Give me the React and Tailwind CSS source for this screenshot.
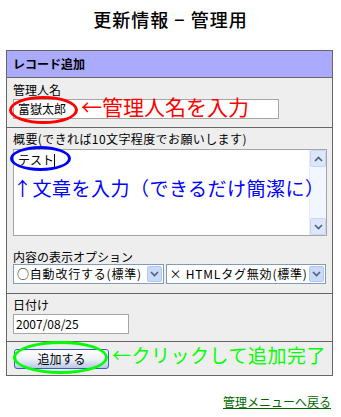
import React from 'react';

const font = "font-['Noto_Sans_CJK_JP','Noto_Sans_CJK_SC',sans-serif]";

const Chevron = ({ up }) => (
  <svg width="9" height="6" viewBox="0 0 9 6">
    <path d={up ? 'M1 5l3.5-3.5L8 5' : 'M1 1l3.5 3.5L8 1'} stroke="#4d6185" strokeWidth="1.6" fill="none" />
  </svg>
);

const SelectBox = ({ text, className }) => (
  <div className={`flex h-[20px] items-center justify-between border border-[#7f9db9] bg-white pl-[3px] pr-[1px] ${className}`}>
    <span className="leading-[16px] whitespace-nowrap tracking-[0.8px]">{text}</span>
    <div className="flex h-[16px] w-[15px] items-center justify-center rounded-[2px] border border-[#b3c7ef] bg-[#c9daf8]">
      <Chevron />
    </div>
  </div>
);

export default function App() {
  return (
    <div className={`relative h-[417px] w-[341px] overflow-hidden bg-white text-[12px] text-black ${font}`}>
      <h1 className="pt-[9px] text-center text-[18px] font-medium leading-[20px] tracking-[1px]">更新情報 − 管理用</h1>

      {/* Form panel */}
      <div className="ml-[6px] mt-[21px] w-[327px] border border-[#666666] bg-[#eeeeee]">
        <div className="flex h-[27px] items-center border-b border-[#666666] bg-[#aaaaff] pl-[6px] font-bold">
          レコード追加
        </div>

        <div className="border-b border-[#666666] px-[6px] pb-[8px] pt-[4px]">
          <div className="leading-[15px]">管理人名</div>
          <div className="mt-[2px] flex h-[20px] w-[266px] items-center border border-[#a5a5a5] bg-white pl-[4px] leading-[16px]">
            富嶽太郎
          </div>
        </div>

        <div className="border-b border-[#666666] px-[6px] pb-[9px] pt-[3px]">
          <div className="leading-[15px] whitespace-nowrap tracking-[0.4px]">概要(できれば10文字程度でお願いします)</div>
          <div className="mt-[3px] flex h-[87px] w-[314px] border border-[#a5a5a5] bg-white">
            <div className="flex-1 pl-[4px] pt-[2px] leading-[16px]">
              テスト<span className="inline-block h-[13px] w-px translate-y-[2px] bg-black" />
            </div>
            <div className="flex w-[17px] flex-col justify-between border-l border-[#e4ecfc] bg-[#f2f6fe]">
              <div className="flex h-[17px] items-center justify-center rounded-[2px] border border-[#c8d6f5] bg-[#dde7fb]">
                <Chevron up />
              </div>
              <div className="flex h-[17px] items-center justify-center rounded-[2px] border border-[#c8d6f5] bg-[#dde7fb]">
                <Chevron />
              </div>
            </div>
          </div>
          <div className="mt-[13px] leading-[15px]">内容の表示オプション</div>
          <div className="flex gap-[2px]">
            <SelectBox text="○自動改行する(標準)" className="w-[151px]" />
            <SelectBox text="× HTMLタグ無効(標準)" className="w-[161px]" />
          </div>
        </div>

        <div className="border-b border-[#666666] px-[6px] pb-[7px] pt-[3px]">
          <div className="leading-[15px]">日付け</div>
          <div className="mt-[2px] flex h-[20px] w-[116px] items-center border border-[#a5a5a5] bg-white pl-[2px] leading-[16px]">
            2007/08/25
          </div>
        </div>

        <div className="px-[7px] pb-[6px] pt-[7px]">
          <button className="flex h-[20px] w-[95px] items-center justify-center rounded-[3px] border border-[#3a5fbf] bg-gradient-to-b from-white via-[#eef2fa] to-[#b9c7e6] text-[12px] leading-[16px]">
            追加する
          </button>
        </div>
      </div>

      <div className="mt-[18px] pr-[10px] text-right leading-[15px]">
        <a href="#" className="text-[#006600] underline">管理メニューへ戻る</a>
      </div>

      {/* Annotations drawn over the screenshot */}
      <div className="absolute left-[9px] top-[96px] h-[28px] w-[69px] rounded-[50%] border-[3px] border-[#ff0000]" />
      <div className="absolute left-[81px] top-[94px] text-[21px] leading-[24px] whitespace-nowrap text-[#ff0000]">←管理人名を入力</div>

      <div className="absolute left-[10px] top-[146px] h-[25px] w-[61px] rounded-[50%] border-[3px] border-[#0000ff]" />
      <div className="absolute left-[13px] top-[176px] text-[19px] leading-[24px] whitespace-nowrap tracking-[0.5px] text-[#0000ff]">↑文章を入力（できるだけ簡潔に）</div>

      <div className="absolute left-[13px] top-[341px] h-[33px] w-[95px] rounded-[50%] border-[3px] border-[#00ff00]" />
      <div className="absolute left-[112px] top-[343px] text-[19px] leading-[24px] whitespace-nowrap tracking-[0.5px] text-[#00ff00]">←クリックして追加完了</div>
    </div>
  );
}
